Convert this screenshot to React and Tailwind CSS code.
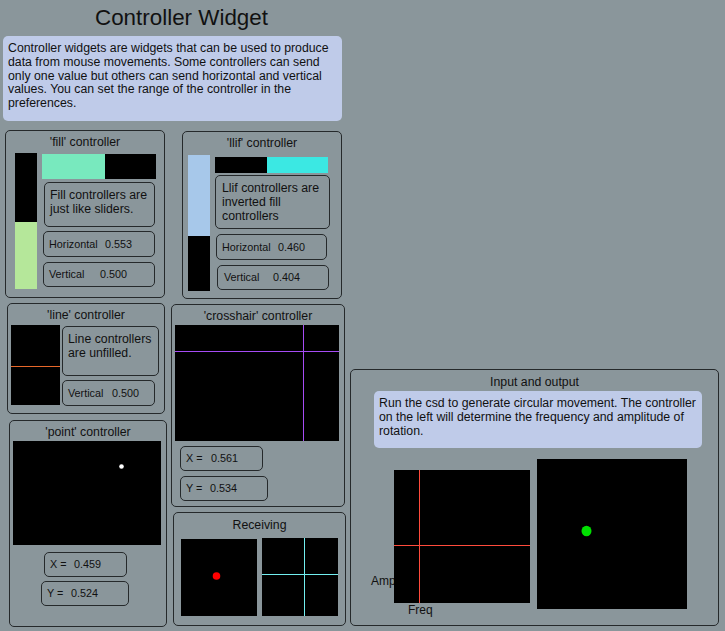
import React from "react";

// Framed widget group with a centred caption
function Panel({ title, className, titleClass = "mt-[4px]", children }) {
  return (
    <div className={`box-border rounded-[5px] border border-[#25292b] ${className}`}>
      <div className={`text-center text-[12.3px] leading-[14px] ${titleClass}`}>{title}</div>
      {children}
    </div>
  );
}

function TextBox({ className, children }) {
  return (
    <div className={`box-border rounded-[5px] border border-[#25292b] pl-[5px] pt-[5px] text-[12.3px] leading-[14px] ${className}`}>
      {children}
    </div>
  );
}

function Display({ className, label, value, labelW }) {
  return (
    <div className={`box-border flex items-center rounded-[5px] border border-[#25292b] pl-[5px] text-[10.8px] leading-none ${className}`}>
      <span className={`shrink-0 ${labelW}`}>{label}</span>
      <span>{value}</span>
    </div>
  );
}

export default function App() {
  return (
    <div className="h-[631px] w-[725px] overflow-hidden bg-[#8a969b] font-['Liberation_Sans',Arial,sans-serif] text-[#111]">
      {/* Header */}
      <div className="ml-[3px] box-border h-[36px] w-[339px] pl-[18px] pt-[5px] text-center text-[22.4px] leading-[26px]">
        Controller Widget
      </div>
      <div className="ml-[3px] box-border h-[85px] w-[339px] rounded-[5px] bg-[#bfcbe9] pl-[5px] pt-[6px] text-[12.3px] leading-[13.8px]">
        Controller widgets are widgets that can be used to produce<br />
        data from mouse movements. Some controllers can send<br />
        only one value but others can send horizontal and vertical<br />
        values. You can set the range of the controller in the<br />
        preferences.
      </div>

      <div className="flex items-start">
        {/* Column 1 */}
        <div className="ml-[5px] flex flex-col items-start">
          <Panel title="'fill' controller" className="mt-[9px] h-[168px] w-[160px]">
            <div className="mt-[4px] flex items-start pl-[9px]">
              <div className="flex h-[136px] w-[22px] flex-col bg-black">
                <div className="flex-1" />
                <div className="h-[67px] bg-[#b5e79a]" />
              </div>
              <div className="ml-[5px] flex w-[114px] flex-col items-start">
                <div className="mt-[1px] flex h-[25px] w-[114px] bg-black">
                  <div className="w-[63px] bg-[#78e9be]" />
                </div>
                <TextBox className="ml-[2px] mt-[3px] h-[45px] w-[111px]">
                  Fill controllers are<br />just like sliders.
                </TextBox>
                <Display className="ml-[1px] mt-[4px] h-[26px] w-[112px]" label="Horizontal" value="0.553" labelW="w-[56px]" />
                <Display className="ml-[1px] mt-[5px] h-[25px] w-[112px]" label="Vertical" value="0.500" labelW="w-[51px]" />
              </div>
            </div>
          </Panel>

          <Panel title="'line' controller" className="ml-[2px] mt-[5px] h-[111px] w-[158px]">
            <div className="mt-[3px] flex items-start pl-[3px]">
              <svg width="49" height="80" className="block shrink-0">
                <rect width="49" height="80" fill="#000" />
                <rect x="0" y="41" width="49" height="1" fill="#e8682a" />
              </svg>
              <div className="ml-[2px] flex flex-col items-start">
                <TextBox className="mt-[1px] h-[50px] w-[97px]">
                  Line controllers<br />are unfilled.
                </TextBox>
                <Display className="mt-[4px] h-[26px] w-[93px]" label="Vertical" value="0.500" labelW="w-[44px]" />
              </div>
            </div>
          </Panel>

          <Panel title="'point' controller" className="ml-[4px] mt-[6px] h-[207px] w-[158px]">
            <div className="mt-[2px] flex flex-col items-start pl-[3px]">
              <svg width="148" height="104" className="block">
                <rect width="148" height="104" fill="#000" />
                <circle cx="108.5" cy="25.5" r="2.3" fill="#fff" />
              </svg>
              <Display className="ml-[31px] mt-[7px] h-[25px] w-[83px]" label="X =" value="0.459" labelW="w-[24px]" />
              <Display className="ml-[28px] mt-[4px] h-[25px] w-[88px]" label="Y =" value="0.524" labelW="w-[24px]" />
            </div>
          </Panel>
        </div>

        {/* Column 2 */}
        <div className="ml-[4px] flex flex-col items-start">
          <Panel title="'llif' controller" className="ml-[11px] mt-[10px] h-[168px] w-[160px]">
            <div className="mt-[5px] flex items-start pl-[5px]">
              <div className="flex h-[136px] w-[22px] flex-col bg-black">
                <div className="h-[81px] bg-[#a7c8ea]" />
              </div>
              <div className="ml-[5px] flex flex-col items-start">
                <div className="mt-[2px] flex h-[16px] w-[113px] bg-black">
                  <div className="w-[52px]" />
                  <div className="flex-1 bg-[#3be8e3]" />
                </div>
                <TextBox className="mt-[2px] h-[54px] w-[115px] pl-[6px]">
                  Llif controllers are<br />inverted fill<br />controllers
                </TextBox>
                <Display className="ml-[1px] mt-[5px] h-[26px] w-[111px]" label="Horizontal" value="0.460" labelW="w-[56px]" />
                <Display className="ml-[2px] mt-[5px] h-[25px] w-[112px] pl-[6px]" label="Vertical" value="0.404" labelW="w-[49px]" />
              </div>
            </div>
          </Panel>

          <Panel title="'crosshair' controller" className="mt-[5px] h-[203px] w-[174px]">
            <div className="mt-[2px] flex flex-col items-start pl-[3px]">
              <svg width="164" height="116" className="block">
                <rect width="164" height="116" fill="#000" />
                <rect x="0" y="26" width="164" height="1" fill="#a64cf5" />
                <rect x="128" y="0" width="1" height="116" fill="#a64cf5" />
              </svg>
              <Display className="ml-[5px] mt-[5px] h-[25px] w-[83px]" label="X =" value="0.561" labelW="w-[25px]" />
              <Display className="ml-[5px] mt-[5px] h-[25px] w-[88px]" label="Y =" value="0.534" labelW="w-[24px]" />
            </div>
          </Panel>

          <Panel title="Receiving" titleClass="mt-[5px]" className="ml-[2px] mt-[5px] h-[114px] w-[173px]">
            <div className="mt-[6px] flex items-start pl-[7px]">
              <svg width="76" height="77" className="mt-[1px] block shrink-0">
                <rect width="76" height="77" fill="#000" />
                <circle cx="35.5" cy="37" r="3.8" fill="#ff0000" />
              </svg>
              <svg width="76" height="78" className="ml-[5px] block shrink-0">
                <rect width="76" height="78" fill="#000" />
                <rect x="0" y="36" width="76" height="1" fill="#72eef0" />
                <rect x="42" y="0" width="1" height="78" fill="#72eef0" />
              </svg>
            </div>
          </Panel>
        </div>

        {/* Column 3 */}
        <Panel title="Input and output" titleClass="mt-[5px]" className="ml-[4px] mt-[248px] h-[257px] w-[369px]">
          <div className="ml-[23px] mt-[2px] box-border h-[57px] w-[328px] rounded-[5px] bg-[#bfcbe9] pl-[5px] pt-[5px] text-[12.3px] leading-[14px]">
            Run the csd to generate circular movement. The controller<br />
            on the left will determine the frequency and amplitude of<br />
            rotation.
          </div>
          <div className="mt-[11px] flex items-start">
            <div className="relative ml-[43px] mt-[11px] flex flex-col items-start">
              <span className="absolute left-[-23px] top-[104px] text-[12px] leading-[14px]">Amp</span>
              <svg width="136" height="133" className="relative z-10 block">
                <rect width="136" height="133" fill="#000" />
                <rect x="0" y="75" width="136" height="1" fill="#ff4b3c" />
                <rect x="25" y="0" width="1" height="133" fill="#ff4b3c" />
              </svg>
              <span className="ml-[14px] text-[12px] leading-[14px]">Freq</span>
            </div>
            <svg width="150" height="150" className="ml-[7px] block shrink-0">
              <rect width="150" height="150" fill="#000" />
              <ellipse cx="49.5" cy="72" rx="5" ry="5.2" fill="#00e000" />
            </svg>
          </div>
        </Panel>
      </div>
    </div>
  );
}
